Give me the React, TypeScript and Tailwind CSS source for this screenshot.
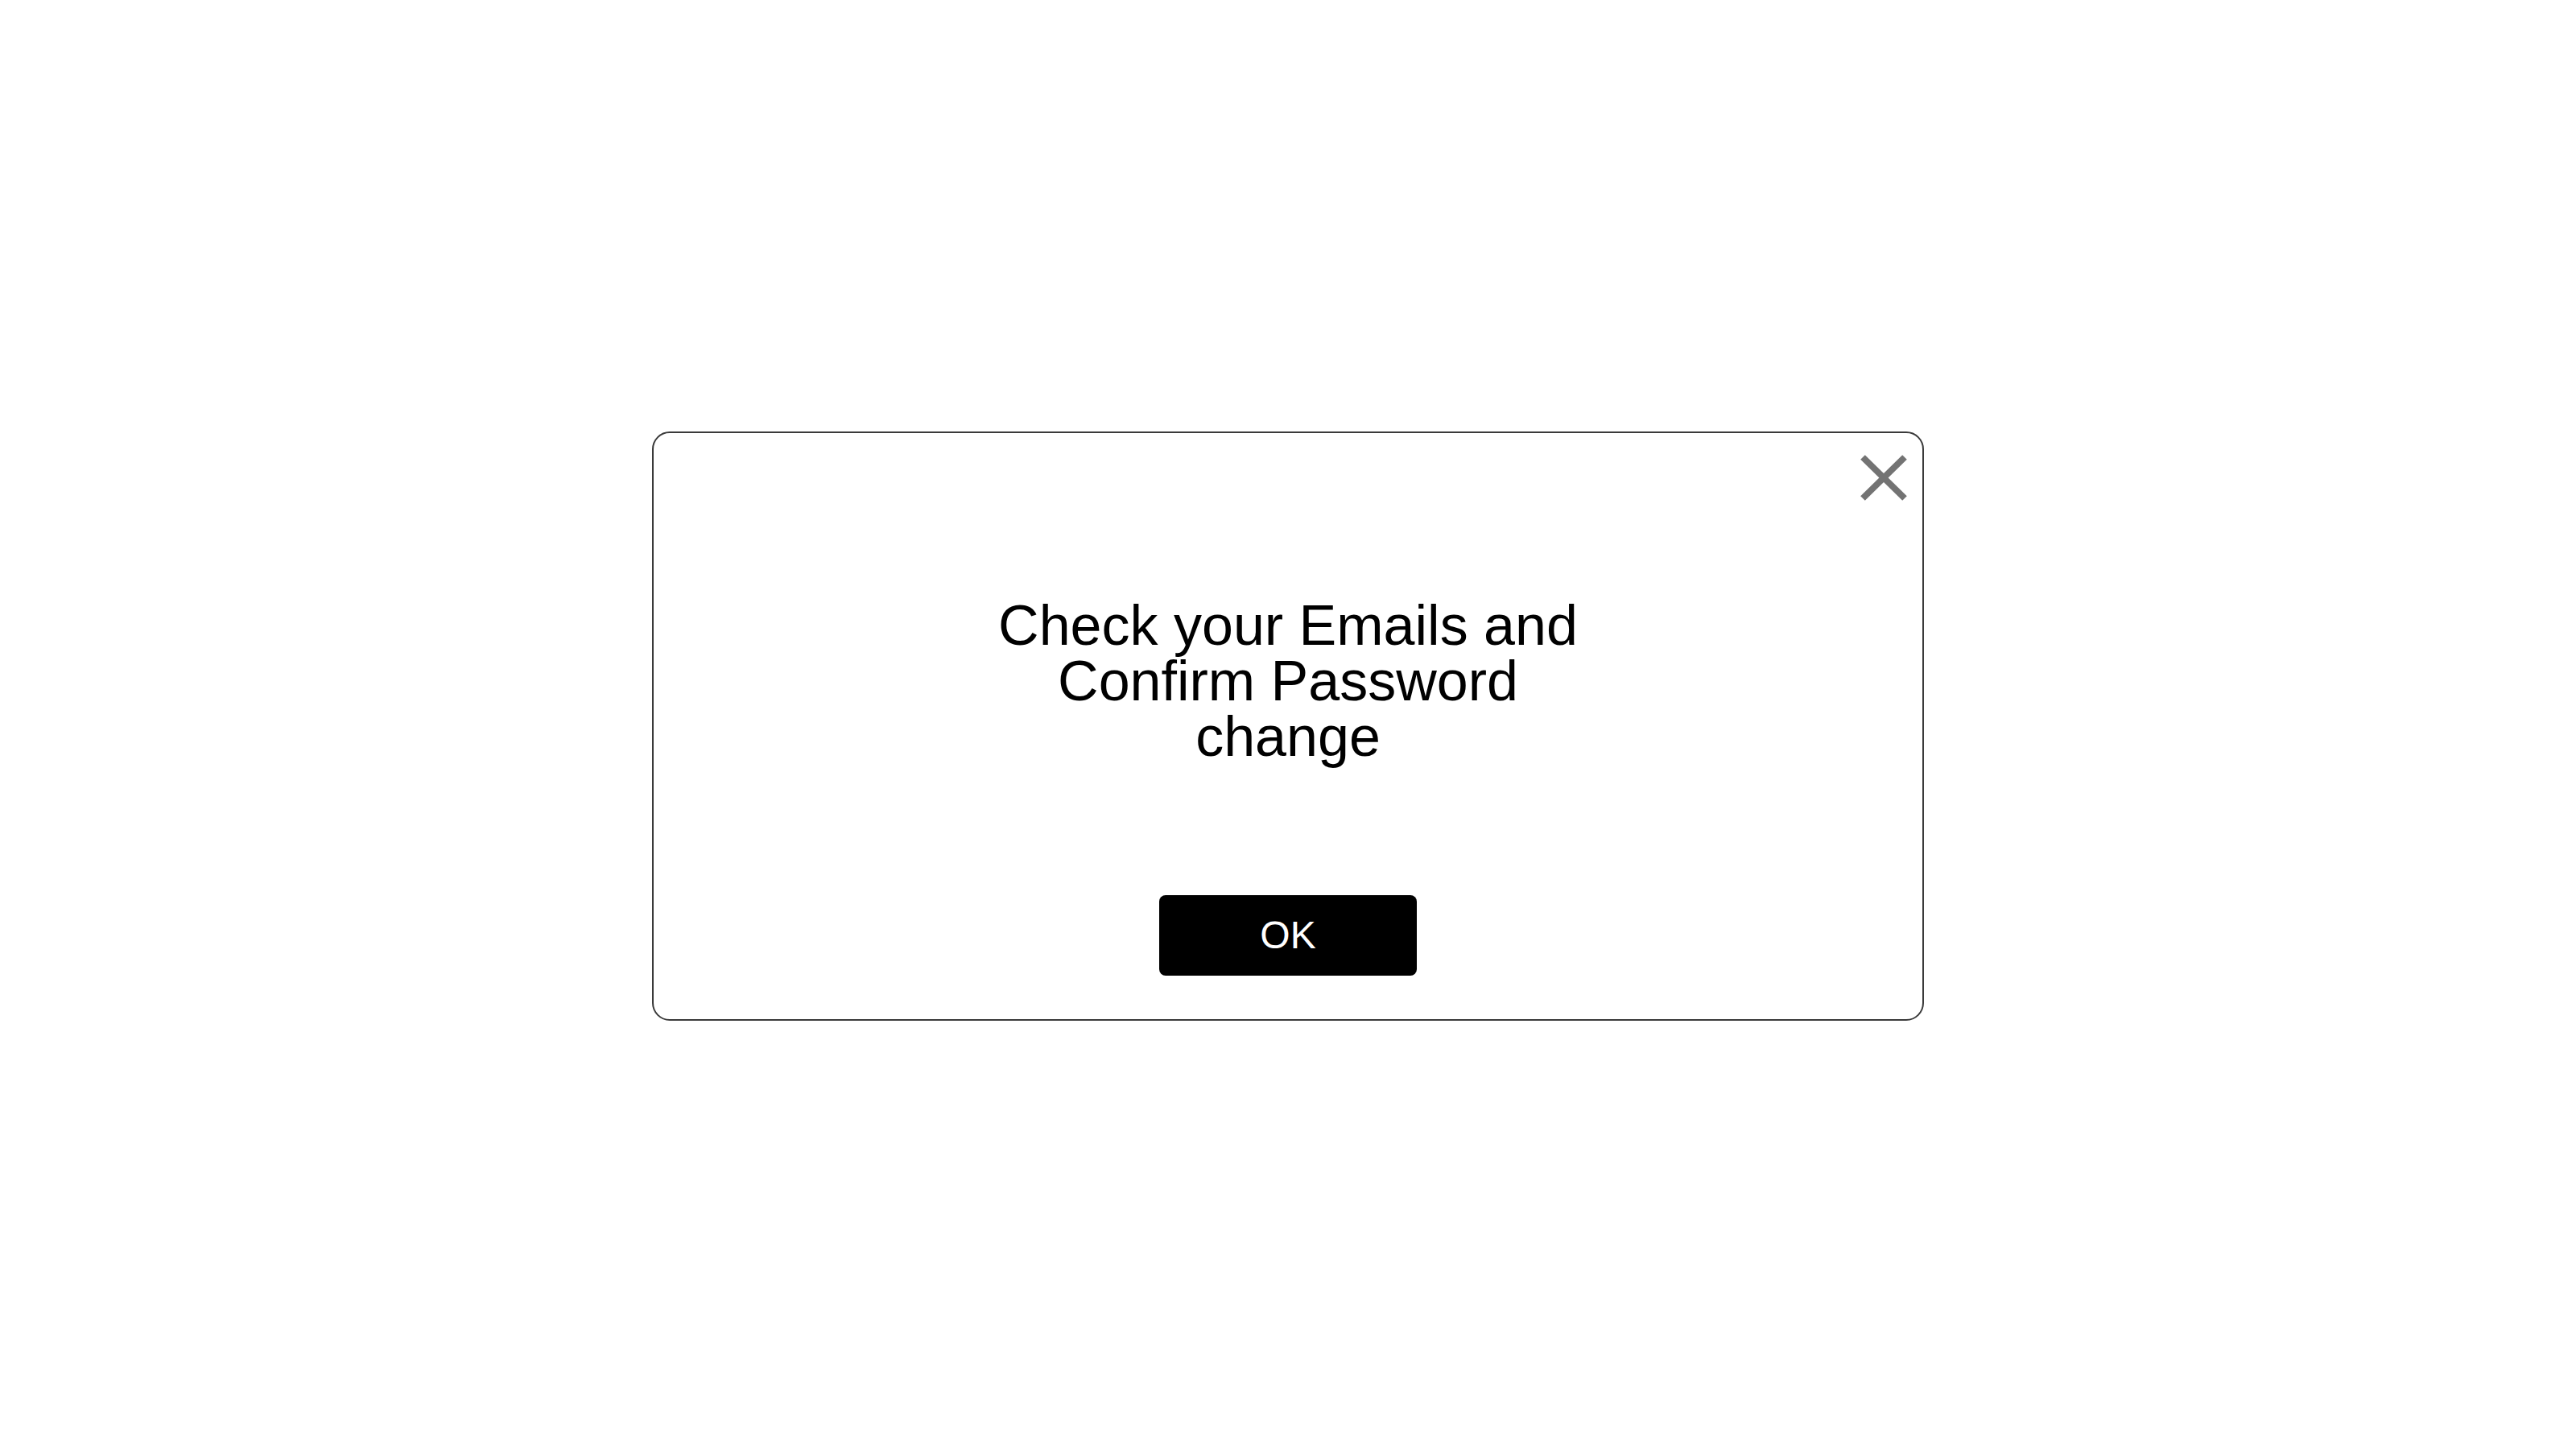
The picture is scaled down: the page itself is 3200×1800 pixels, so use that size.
function CloseIcon() {
  return (
    <svg width="58" height="57" viewBox="0 0 58 57" className="block">
      <line x1="3" y1="3" x2="55" y2="54" stroke="#737373" strokeWidth="8" />
      <line x1="55" y1="3" x2="3" y2="54" stroke="#737373" strokeWidth="8" />
    </svg>
  )
}

export default function App() {
  return (
    <div className="flex h-screen w-full items-center justify-center bg-white pt-[3px] font-['Liberation_Sans',Arial,sans-serif]">
        {/* Dialog */}
        <div className="relative flex h-[732px] w-[1580px] flex-col items-center rounded-[22px] border-2 border-[#3a3a3a] bg-white pt-[205px]">
            <button className="absolute right-[19px] top-[27px]" aria-label="Close">
                <CloseIcon />
            </button>
            <p className="w-[760px] text-center text-[70px] leading-[69px] text-black">
                Check your Emails and Confirm Password change
            </p>
            <button className="mt-[162px] flex h-[100px] w-[320px] items-center justify-center rounded-lg bg-black text-[48px] text-white">
                OK
            </button>
        </div>
    </div>
  )
}
